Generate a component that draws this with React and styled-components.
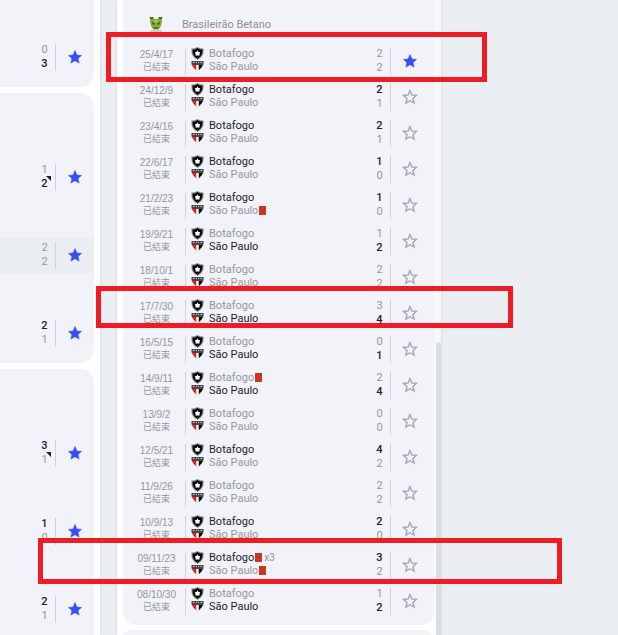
import React, { useState } from 'react';
import styled, { createGlobalStyle, css } from 'styled-components';

const GlobalStyle = createGlobalStyle`
  * {
    box-sizing: border-box;
  }
  body {
    margin: 0;
    background: #ebeff4;
    color: #1f2126;
    font-family: Roboto, 'Noto Sans CJK TC', sans-serif;
    font-size: 11px;
    overflow: hidden;
  }
  ul {
    list-style: none;
    margin: 0;
    padding: 0;
  }
`;

const Page = styled.div`
  position: relative;
  display: grid;
  grid-template-columns: 100fr 324fr 160fr;
  column-gap: 17px;
  height: 100vh;
  overflow: hidden;
`;

const Panel = styled.section`
  display: flex;
  background: #fff;
  box-shadow: 0 0 3px rgba(30, 40, 70, 0.14);
  min-width: 0;
  overflow: hidden;
`;

const LiveColumn = styled.div`
  flex: 1;
  display: flex;
  flex-direction: column;
  gap: 6px;
  padding-right: 6px;
`;

const LiveCard = styled.ul`
  display: flex;
  flex-direction: column;
  gap: 42px;
  flex-shrink: 0;
  background: #f2f3f8;
  border-radius: 0 14px 14px 0;
  padding: 66px 0 12px;
  &:first-child {
    border-top-right-radius: 0;
    padding-top: 39px;
  }
  &:last-child {
    border-bottom-right-radius: 0;
    flex-grow: 1;
  }
`;

const LiveRow = styled.li`
  display: flex;
  align-items: center;
  justify-content: flex-end;
  height: 36px;
  background: ${props => (props.$active ? '#eaeef3' : 'transparent')};
`;

const HistoryColumn = styled.div`
  flex: 1;
  display: flex;
  flex-direction: column;
  gap: 5px;
  padding: 0 1px 0 3px;
  min-width: 0;
`;

const HistoryCard = styled.div`
  flex-shrink: 0;
  margin-left: 3px;
  padding: 5px 0 6px;
  background: #f2f3f8;
  border-radius: 0 0 14px 14px;
`;

const NextCard = styled.div`
  flex-shrink: 0;
  height: 60px;
  background: #f2f3f8;
  border-radius: 12px 12px 0 0;
`;

const League = styled.header`
  display: flex;
  align-items: center;
  height: 38px;
  padding-left: 26px;
  gap: 19px;
  color: #8d8f96;
  h2 {
    margin: 0;
    font-size: 11px;
    font-weight: 400;
  }
`;

const MatchRow = styled.li`
  display: flex;
  align-items: center;
  height: 36px;
`;

const MatchDate = styled.div`
  width: 62px;
  padding: 0 0 1px 5px;
  text-align: center;
  font-family: 'Liberation Sans', 'Noto Sans CJK TC', sans-serif;
  font-size: 10px;
  line-height: 13px;
  color: #94969d;
  time,
  span {
    display: block;
  }
  span {
    font-size: 9px;
  }
`;

const Divider = styled.i`
  flex: none;
  align-self: center;
  width: 1px;
  height: 27px;
  background: #d0d2d9;
`;

const Teams = styled.div`
  flex: 1;
  min-width: 0;
  padding: 0 0 2px 5px;
`;

const winnerColor = css`
  color: ${props => (props.$win ? '#1f2126' : '#94969d')};
`;

const Team = styled.div`
  display: flex;
  align-items: center;
  height: 13px;
  line-height: 13px;
  ${winnerColor}
  svg {
    width: 13px;
    height: 13px;
    margin-right: 5px;
  }
`;

const RedCard = styled.i`
  width: 7px;
  height: 9px;
  margin-left: 1px;
  background: #c8371f;
`;

const CardCount = styled.small`
  margin-left: 2px;
  font-size: 10px;
  color: #94969d;
`;

const Scores = styled.div`
  flex: none;
  width: 21px;
  text-align: center;
`;

const Score = styled.div`
  position: relative;
  height: 14px;
  line-height: 14px;
  font-size: 11px;
  font-weight: ${props => (props.$win ? 500 : 400)};
  ${winnerColor}
`;

const Corner = styled.i`
  position: absolute;
  top: -1px;
  right: 4px;
  border-top: 5px solid #1f2126;
  border-left: 5px solid transparent;
`;

const StarButton = styled.button`
  display: flex;
  flex: none;
  align-items: center;
  justify-content: center;
  width: 38px;
  height: 36px;
  margin-right: ${props => (props.$inset ? '6px' : 0)};
  padding: 0;
  border: 0;
  background: none;
  cursor: pointer;
  svg {
    width: 16px;
    height: 16px;
  }
`;

const Scrollbar = styled.div`
  display: flex;
  flex: none;
  flex-direction: column;
  width: 5px;
  background: #f7f7f8;
  &::before {
    content: '';
    flex: 342;
  }
  &::after {
    content: '';
    flex: 293;
    background: #dcdde2;
    border-radius: 3px 3px 0 0;
  }
`;

// hand-drawn marks that sit on top of the lists
const Mark = styled.div`
  position: absolute;
  top: ${props => props.$top}px;
  left: ${props => props.$left}px;
  width: ${props => props.$width}px;
  height: ${props => props.$height}px;
  border: 5px solid #ee1c24;
  pointer-events: none;
`;

const liveCards = [
  [{ home: 0, away: 3 }],
  [
    { home: 1, away: 2, corner: true },
    { home: 2, away: 2, active: true },
    { home: 2, away: 1 },
  ],
  [
    { home: 3, away: 1, corner: true },
    { home: 1, away: 0 },
    { home: 2, away: 1 },
  ],
];

const matches = [
  { date: '25/4/17', home: 2, away: 2, starred: true },
  { date: '24/12/9', home: 2, away: 1 },
  { date: '23/4/16', home: 2, away: 1 },
  { date: '22/6/17', home: 1, away: 0 },
  { date: '21/2/23', home: 1, away: 0, awayReds: 1 },
  { date: '19/9/21', home: 1, away: 2 },
  { date: '18/10/1', home: 2, away: 2 },
  { date: '17/7/30', home: 3, away: 4 },
  { date: '16/5/15', home: 0, away: 1 },
  { date: '14/9/11', home: 2, away: 4, homeReds: 1 },
  { date: '13/9/2', home: 0, away: 0 },
  { date: '12/5/21', home: 4, away: 2 },
  { date: '11/9/26', home: 2, away: 2 },
  { date: '10/9/13', home: 2, away: 0 },
  { date: '09/11/23', home: 3, away: 2, homeReds: 3, awayReds: 1 },
  { date: '08/10/30', home: 1, away: 2 },
];

const Botafogo = () => (
  <svg viewBox="0 0 26 26" aria-hidden="true">
    <path d="M1 3 Q8 3 13 0 Q18 3 25 3 Q27 19 13 26 Q-1 19 1 3Z" fill="#8f9094" />
    <path d="M3 5 Q9 5 13 2 Q17 5 23 5 Q24 18 13 24 Q2 18 3 5Z" fill="#0d0d0e" />
    <path
      d="M13 7 L15 10 L18 10 L17 14 L17 17 L13 17 L9 17 L9 14 L8 10 L11 10Z"
      fill="#fff"
    />
  </svg>
);

const SaoPaulo = () => (
  <svg viewBox="0 0 26 26" aria-hidden="true">
    <path d="M0 2 H26 V9 L22 16 L13 26 L4 16 L0 9Z" fill="#dfe0e3" />
    <path d="M1 2 H25 V8 L24 10 H2 L1 8Z" fill="#48484b" />
    <path d="M4 5 H7 M10 5 H12 M14 5 H16 M19 5 H22" stroke="#c4c4c7" strokeWidth="2" />
    <path d="M2 10 H11 V21 L5 15Z" fill="#f01414" />
    <path d="M15 10 H24 L21 15 L15 21Z" fill="#0d0d0e" />
    <path d="M11 10 H15 V22 L13 24 L11 22Z" fill="#fff" />
  </svg>
);

const LeagueLogo = () => (
  <svg width="14" height="16" viewBox="0 0 28 32" aria-hidden="true">
    <path d="M3 3 H9 L11 6 H17 L19 3 H25 L26 12 L23 22 L19 27 H9 L5 22 L2 12Z" fill="#8aaa35" />
    <path d="M1 2 H9 L7 6 L3 7Z M27 2 H19 L21 6 L25 7Z" fill="#4d632c" />
    <path d="M6 12 L12 15 L10 18 L6 16Z M22 12 L16 15 L18 18 L22 16Z" fill="#4a5f25" />
    <path d="M10 8 H18 L16 13 H12Z" fill="#b4cf44" />
    <path d="M9 22 H19 L18 26 H10Z" fill="#5b7429" />
    <path d="M3 30 H26" stroke="#a3a7a0" strokeWidth="2" />
  </svg>
);

const Star = ({ filled }) => (
  <svg viewBox="0 0 16 16" aria-hidden="true">
    <path
      d="M8 1.600 L9.900 6 L14.500 6.400 L11.050 9.500 L12.100 14.100 L8 11.700 L3.900 14.100 L4.950 9.500 L1.500 6.400 L6.100 6Z"
      fill={filled ? '#374df5' : 'none'}
      stroke={filled ? '#374df5' : '#a4a9b3'}
      strokeWidth={filled ? 0.6 : 1.4}
    />
  </svg>
);

const Favourite = ({ initial, inset }) => {
  const [starred, setStarred] = useState(Boolean(initial));
  return (
    <StarButton
      type="button"
      $inset={inset}
      aria-label="Favourite"
      aria-pressed={starred}
      onClick={() => setStarred(!starred)}
    >
      <Star filled={starred} />
    </StarButton>
  );
};

const ScorePair = ({ home, away, corner }) => (
  <Scores>
    <Score $win={home > away}>{home}</Score>
    <Score $win={away > home}>
      {away}
      {corner && <Corner />}
    </Score>
  </Scores>
);

const TeamLine = ({ crest, name, win, reds }) => (
  <Team $win={win}>
    {crest}
    {name}
    {reds > 0 && <RedCard />}
    {reds > 1 && <CardCount>x{reds}</CardCount>}
  </Team>
);

const Match = ({ match }) => {
  const { date, home, away, homeReds, awayReds, starred } = match;
  return (
    <MatchRow>
      <MatchDate>
        <time>{date}</time>
        <span>已結束</span>
      </MatchDate>
      <Divider />
      <Teams>
        <TeamLine crest={<Botafogo />} name="Botafogo" win={home > away} reds={homeReds} />
        <TeamLine crest={<SaoPaulo />} name="São Paulo" win={away > home} reds={awayReds} />
      </Teams>
      <ScorePair home={home} away={away} />
      <Divider />
      <Favourite initial={starred} inset />
    </MatchRow>
  );
};

const App = () => (
  <Page>
    <GlobalStyle />
    <Panel>
      <LiveColumn>
        {liveCards.map((rows, i) => (
          <LiveCard key={i}>
            {rows.map((row, j) => (
              <LiveRow key={j} $active={row.active}>
                <ScorePair home={row.home} away={row.away} corner={row.corner} />
                <Divider />
                <Favourite initial />
              </LiveRow>
            ))}
          </LiveCard>
        ))}
      </LiveColumn>
    </Panel>
    <Panel>
      <HistoryColumn>
        <HistoryCard>
          <League>
            <LeagueLogo />
            <h2>Brasileirão Betano</h2>
          </League>
          <ul>
            {matches.map(match => (
              <Match key={match.date} match={match} />
            ))}
          </ul>
        </HistoryCard>
        <NextCard />
      </HistoryColumn>
      <Scrollbar />
    </Panel>
    <Mark $top={32} $left={106} $width={381} $height={50} />
    <Mark $top={286} $left={96} $width={417} $height={42} />
    <Mark $top={538} $left={38} $width={524} $height={46} />
  </Page>
);

export default App;
